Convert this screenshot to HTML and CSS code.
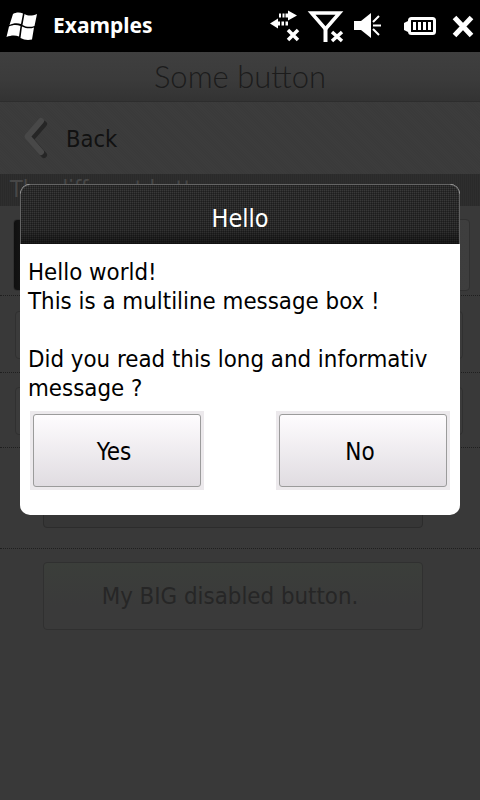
FILE: index.html
```html
<!DOCTYPE html>
<html lang="en">
<head>
<meta charset="utf-8">
<title>Examples</title>
<link rel="stylesheet" href="styles.css">
</head>
<body>
<div class="phone">
  <div class="statusbar">
    <svg class="winlogo" width="32" height="30" viewBox="0 0 32 30">
      <path fill="#fff" d="M7 3 C10 1 14 1 17 2.500 L15 13 C11.500 11.500 7 12 3.500 14 Z"/>
      <path fill="#fff" d="M18.500 3 C22 5 26 5 31 3 L28.500 15 C24.500 16.500 20 16 16.500 14 Z"/>
      <path fill="#fff" d="M3 15.500 C7 13.500 11 13.500 14.500 15 L13 25.500 C9 24 4.500 24.500 0.500 26 Z"/>
      <path fill="#fff" d="M16 15.500 C20 17.500 24 18 28 16.500 L26 28.500 C22 29.500 18 29 14.500 27 Z"/>
    </svg>
    <span class="apptitle">Examples</span>
    <svg class="tray" width="210" height="44" viewBox="0 0 210 44">
      <g fill="#fff">
        <path d="M0 19.500 L8 14.500 V17.500 H10 V21.500 H8 V24.500 Z"/>
        <path d="M11.500 17.500 h2.500 v4 h-2.500z M15.500 17.500 h2.500 v4 h-2.500z"/>
        <path d="M27 11.500 L18 6.500 V9.500 H15.500 V13.500 H18 V16.500 Z"/>
        <path d="M9 9.500 h2 v4 h-2z M12.500 9.500 h2 v4 h-2z"/>
      </g>
      <path d="M18 26 L28 36 M28 26 L18 36" stroke="#fff" stroke-width="3.500" fill="none"/>
      <path d="M41.500 9 H69.500 L55.500 25 Z" fill="none" stroke="#fff" stroke-width="3.500"/>
      <path d="M55.500 24 V38" stroke="#fff" stroke-width="4" fill="none"/>
      <path d="M62 28 L72 37 M72 28 L62 37" stroke="#fff" stroke-width="3.500" fill="none"/>
      <path d="M84 17 H91 L101 9 V34 L91 26 H84 Z" fill="#fff"/>
      <path d="M103 18 L109 12 M103 21.500 H111 M103 25 L109 31" stroke="#fff" stroke-width="2" fill="none"/>
      <rect x="139.500" y="14.500" width="25" height="15" rx="2" fill="none" stroke="#fff" stroke-width="3"/>
      <path d="M138 17 L134 19 V26 L138 28z M143 18 h3 v8 h-3z M148 18 h3 v8 h-3z M153 18 h3 v8 h-3z M158 18 h3 v8 h-3z" fill="#fff"/>
      <path d="M184.500 13.500 L201.500 31.500 M201.500 13.500 L184.500 31.500" stroke="#fff" stroke-width="5" fill="none"/>
    </svg>
  </div>
  <div class="page">
    <header class="titlebar">Some button</header>
    <div class="backrow">
      <svg class="backicon" width="36" height="44" viewBox="0 0 36 44">
        <path d="M23 5 L9.500 20.500 L23 36" fill="none" stroke="#1c1c1c" stroke-width="6" stroke-linecap="round" stroke-linejoin="round" transform="translate(3 3)" opacity="0.7"/>
        <path d="M23 5 L9.500 20.500 L23 36" fill="none" stroke="#484848" stroke-width="6" stroke-linecap="round" stroke-linejoin="round"/>
      </svg>
      <span class="backlabel">Back</span>
    </div>
    <div class="section">The different buttons</div>
    <div class="row row-first"><div class="btn btn-dark"></div></div>
    <div class="row row-second"><div class="btn btn-wide"></div></div>
    <div class="row row-third"><div class="btn btn-wide"></div></div>
    <div class="row row-fourth"><div class="btn btn-big"></div></div>
    <div class="row row-last"><div class="btn btn-disabled">My BIG disabled button.</div></div>
  </div>
  <div class="dialog">
    <div class="dialog-head">Hello</div>
    <div class="dialog-body">
      <p class="message">Hello world!<br>This is a multiline message box !<br><br>Did you read this long and informativ<br>message ?</p>
      <div class="actions">
        <div class="action"><span class="action-face">Yes</span></div>
        <div class="action"><span class="action-face">No</span></div>
      </div>
    </div>
  </div>
</div>
</body>
</html>
```
FILE: styles.css
```css
* { box-sizing: border-box; }
html, body { margin: 0; padding: 0; }
body { width: 480px; height: 800px; overflow: hidden; background: #393939; font-family: "DejaVu Sans Condensed", "DejaVu Sans", sans-serif; font-stretch: condensed; }
.phone { position: relative; width: 480px; height: 800px; overflow: hidden; }
.statusbar { height: 52px; background: #000; display: flex; align-items: center; }
.winlogo { margin-left: 6px; flex: none; }
.apptitle { margin: 0 0 2px 15px; color: #fff; font: bold 21px "Noto Sans", sans-serif; }
.tray { margin-left: auto; flex: none; }
.page { background: #393939; height: 748px; }
.titlebar { height: 50px; border-bottom: 1px solid #2d2d2d; background: linear-gradient(#3f3f3f, #3b3b3b 55%, #333); text-align: center; color: #1c1c1c; font: 300 31px/48px Lato, sans-serif; }
.backrow { height: 72px; display: flex; align-items: center; background: repeating-linear-gradient(45deg, #3c3c3c 0 1px, #3a3a3a 1px 2px); }
.backicon { margin-left: 18px; flex: none; }
.backlabel { margin: 2px 0 0 12px; font-size: 23.500px; color: #111; }
.section { height: 32px; background: repeating-linear-gradient(90deg, #2a2a2a 0 1px, #2e2e2e 1px 2px); color: #474747; font-size: 23px; line-height: 30px; padding-left: 10px; overflow: hidden; white-space: nowrap; }
.row { border-bottom: 1px dotted #1f1f1f; display: flex; align-items: flex-start; }
.row-first { height: 90px; padding: 13px 10px 0 13px; }
.row-second { height: 77px; padding: 15px 17px 0 15px; }
.row-third { height: 75px; padding: 14px 17px 0 15px; }
.row-fourth { height: 101px; padding: 13px 57px 0 43px; }
.row-last { border-bottom: 0; padding: 13px 57px 0 43px; }
.btn { flex: 1; border-radius: 4px; }
.btn-dark { height: 72px; background: linear-gradient(90deg, #0f0f0f 0, #2d2d2d 8%, #3e3e3e); border: 1px solid #303030; }
.btn-wide { height: 48px; border: 1px solid #303030; background: #3b3b3b; }
.btn-big { height: 67px; border: 1px solid #2c2c2c; background: #363636; }
.btn-disabled { height: 68px; padding-right: 6px; border: 1px solid #303030; background: linear-gradient(#3b3e3a, #3a3a3a 65%); color: #262626; font-size: 23.800px; line-height: 67px; text-align: center; white-space: nowrap; }
.dialog { position: absolute; left: 20px; top: 184px; width: 440px; height: 331px; border-radius: 10px; overflow: hidden; background: #fff; }
.dialog-head { height: 60px; background: repeating-linear-gradient(90deg, rgba(0,0,0,.28) 0 1px, transparent 1px 2px), repeating-linear-gradient(0deg, rgba(0,0,0,.28) 0 1px, transparent 1px 2px), linear-gradient(#3a3a3a, #353535 75%, #1c1c1c); border: 1px solid #646464; border-bottom: 0; border-radius: 10px 10px 0 0; color: #fff; font-size: 25px; line-height: 68px; text-align: center; }
.dialog-body { padding: 0 8px; }
.message { margin: 14px 0 0; color: #000; font-size: 23.800px; line-height: 29px; white-space: nowrap; }
.actions { display: flex; justify-content: space-between; margin: 8px 2px 0; }
.action { width: 174px; height: 79px; padding: 3px; background: #ece9ec; }
.action-face { display: block; height: 73px; padding-right: 6px; border: 1px solid #9b9b9b; border-radius: 3px; background: linear-gradient(#fefcfe, #e0dce1); font-size: 24px; line-height: 74px; color: #000; text-align: center; }
```
